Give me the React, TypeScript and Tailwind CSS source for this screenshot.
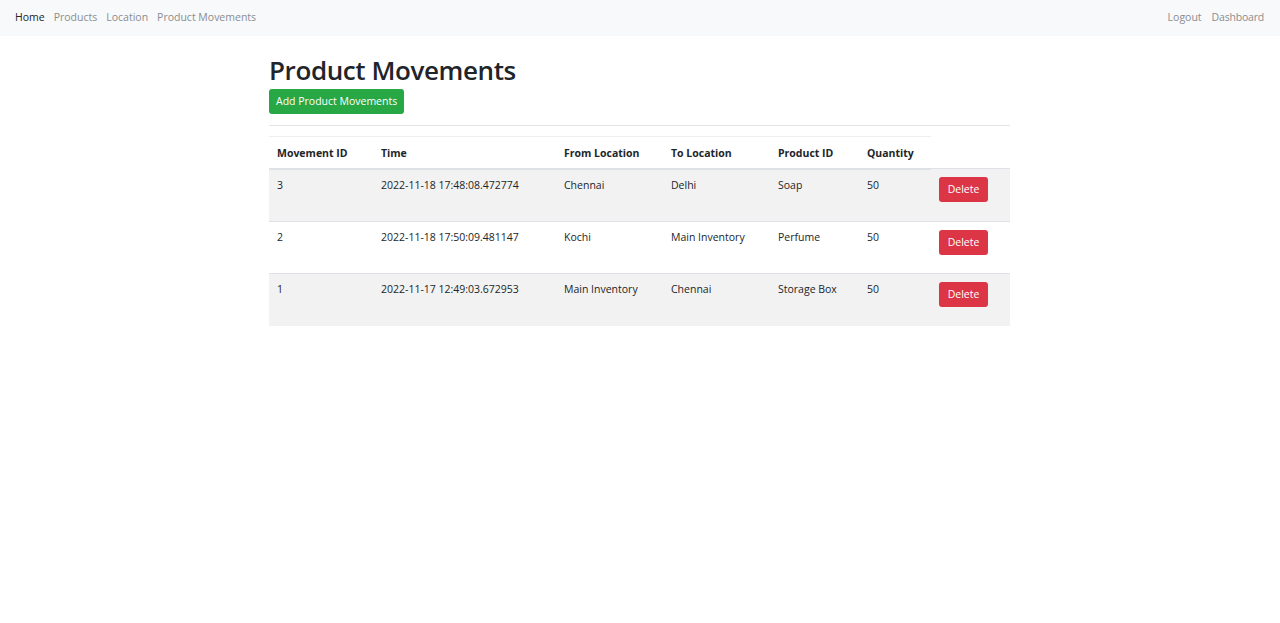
import React from "react";

const rows = [
  { id: "3", time: "2022-11-18 17:48:08.472774", from: "Chennai", to: "Delhi", product: "Soap", qty: "50" },
  { id: "2", time: "2022-11-18 17:50:09.481147", from: "Kochi", to: "Main Inventory", product: "Perfume", qty: "50" },
  { id: "1", time: "2022-11-17 12:49:03.672953", from: "Main Inventory", to: "Chennai", product: "Storage Box", qty: "50" },
];

export default function App() {
  return (
    <div className="min-h-[623px] bg-white text-[#212529]" style={{ fontFamily: '"Open Sans", "Noto Sans", sans-serif' }}>
      <nav className="h-[36px] bg-[#f8f9fa] flex items-center justify-between pl-[15px] pr-[16px] text-[10.5px]">
        <div className="flex items-center gap-[9px]">
          <span className="text-[#212529]">Home</span>
          <span className="text-[#8a8d90]">Products</span>
          <span className="text-[#8a8d90]">Location</span>
          <span className="text-[#8a8d90]">Product Movements</span>
        </div>
        <div className="flex items-center gap-[10px]">
          <span className="text-[#8a8d90]">Logout</span>
          <span className="text-[#8a8d90] tracking-[-0.2px]">Dashboard</span>
        </div>
      </nav>
      <div className="w-[741px] ml-[269px]">
        <h1 className="text-[26px] font-semibold leading-[34px] mt-[17px] tracking-[-0.4px]">Product Movements</h1>
        <button className="mt-[1px] h-[25px] px-[7px] rounded-[3px] bg-[#28a745] text-white text-[10.5px]">Add Product Movements</button>
        <div className="h-px bg-[#e3e4e5] mt-[11px]" />
        <table className="mt-[10px] border-collapse text-[10.5px]" style={{ width: 741 }}>
          <colgroup>
            <col style={{ width: 104 }} />
            <col style={{ width: 183 }} />
            <col style={{ width: 107 }} />
            <col style={{ width: 107 }} />
            <col style={{ width: 89 }} />
            <col style={{ width: 72 }} />
            <col style={{ width: 79 }} />
          </colgroup>
          <thead>
            <tr className="h-[32px]">
              {["Movement ID", "Time", "From Location", "To Location", "Product ID", "Quantity"].map((h) => (
                <th key={h} className="text-left font-bold px-[8px] pt-[2px] border-t border-t-[#eceeef] border-b-2 border-b-[#dee2e6] align-middle">{h}</th>
              ))}
              <th className="border-b-0" />
            </tr>
          </thead>
          <tbody>
            {rows.map((r, i) => (
              <tr key={r.id} className={`h-[52.5px] border-t border-[#dee2e6] ${i % 2 === 0 ? "bg-[#f2f2f2]" : "bg-white"}`}>
                <td className="px-[8px] pt-[8px] align-top">{r.id}</td>
                <td className="px-[8px] pt-[8px] align-top">{r.time}</td>
                <td className="px-[8px] pt-[8px] align-top">{r.from}</td>
                <td className="px-[8px] pt-[8px] align-top">{r.to}</td>
                <td className="px-[8px] pt-[8px] align-top">{r.product}</td>
                <td className="px-[8px] pt-[8px] align-top">{r.qty}</td>
                <td className="px-[8px] pt-[8px] align-top">
                  <button className="h-[25px] w-[49px] rounded-[3px] bg-[#dc3545] text-white text-[10.5px]">Delete</button>
                </td>
              </tr>
            ))}
          </tbody>
        </table>
      </div>
    </div>
  );
}
